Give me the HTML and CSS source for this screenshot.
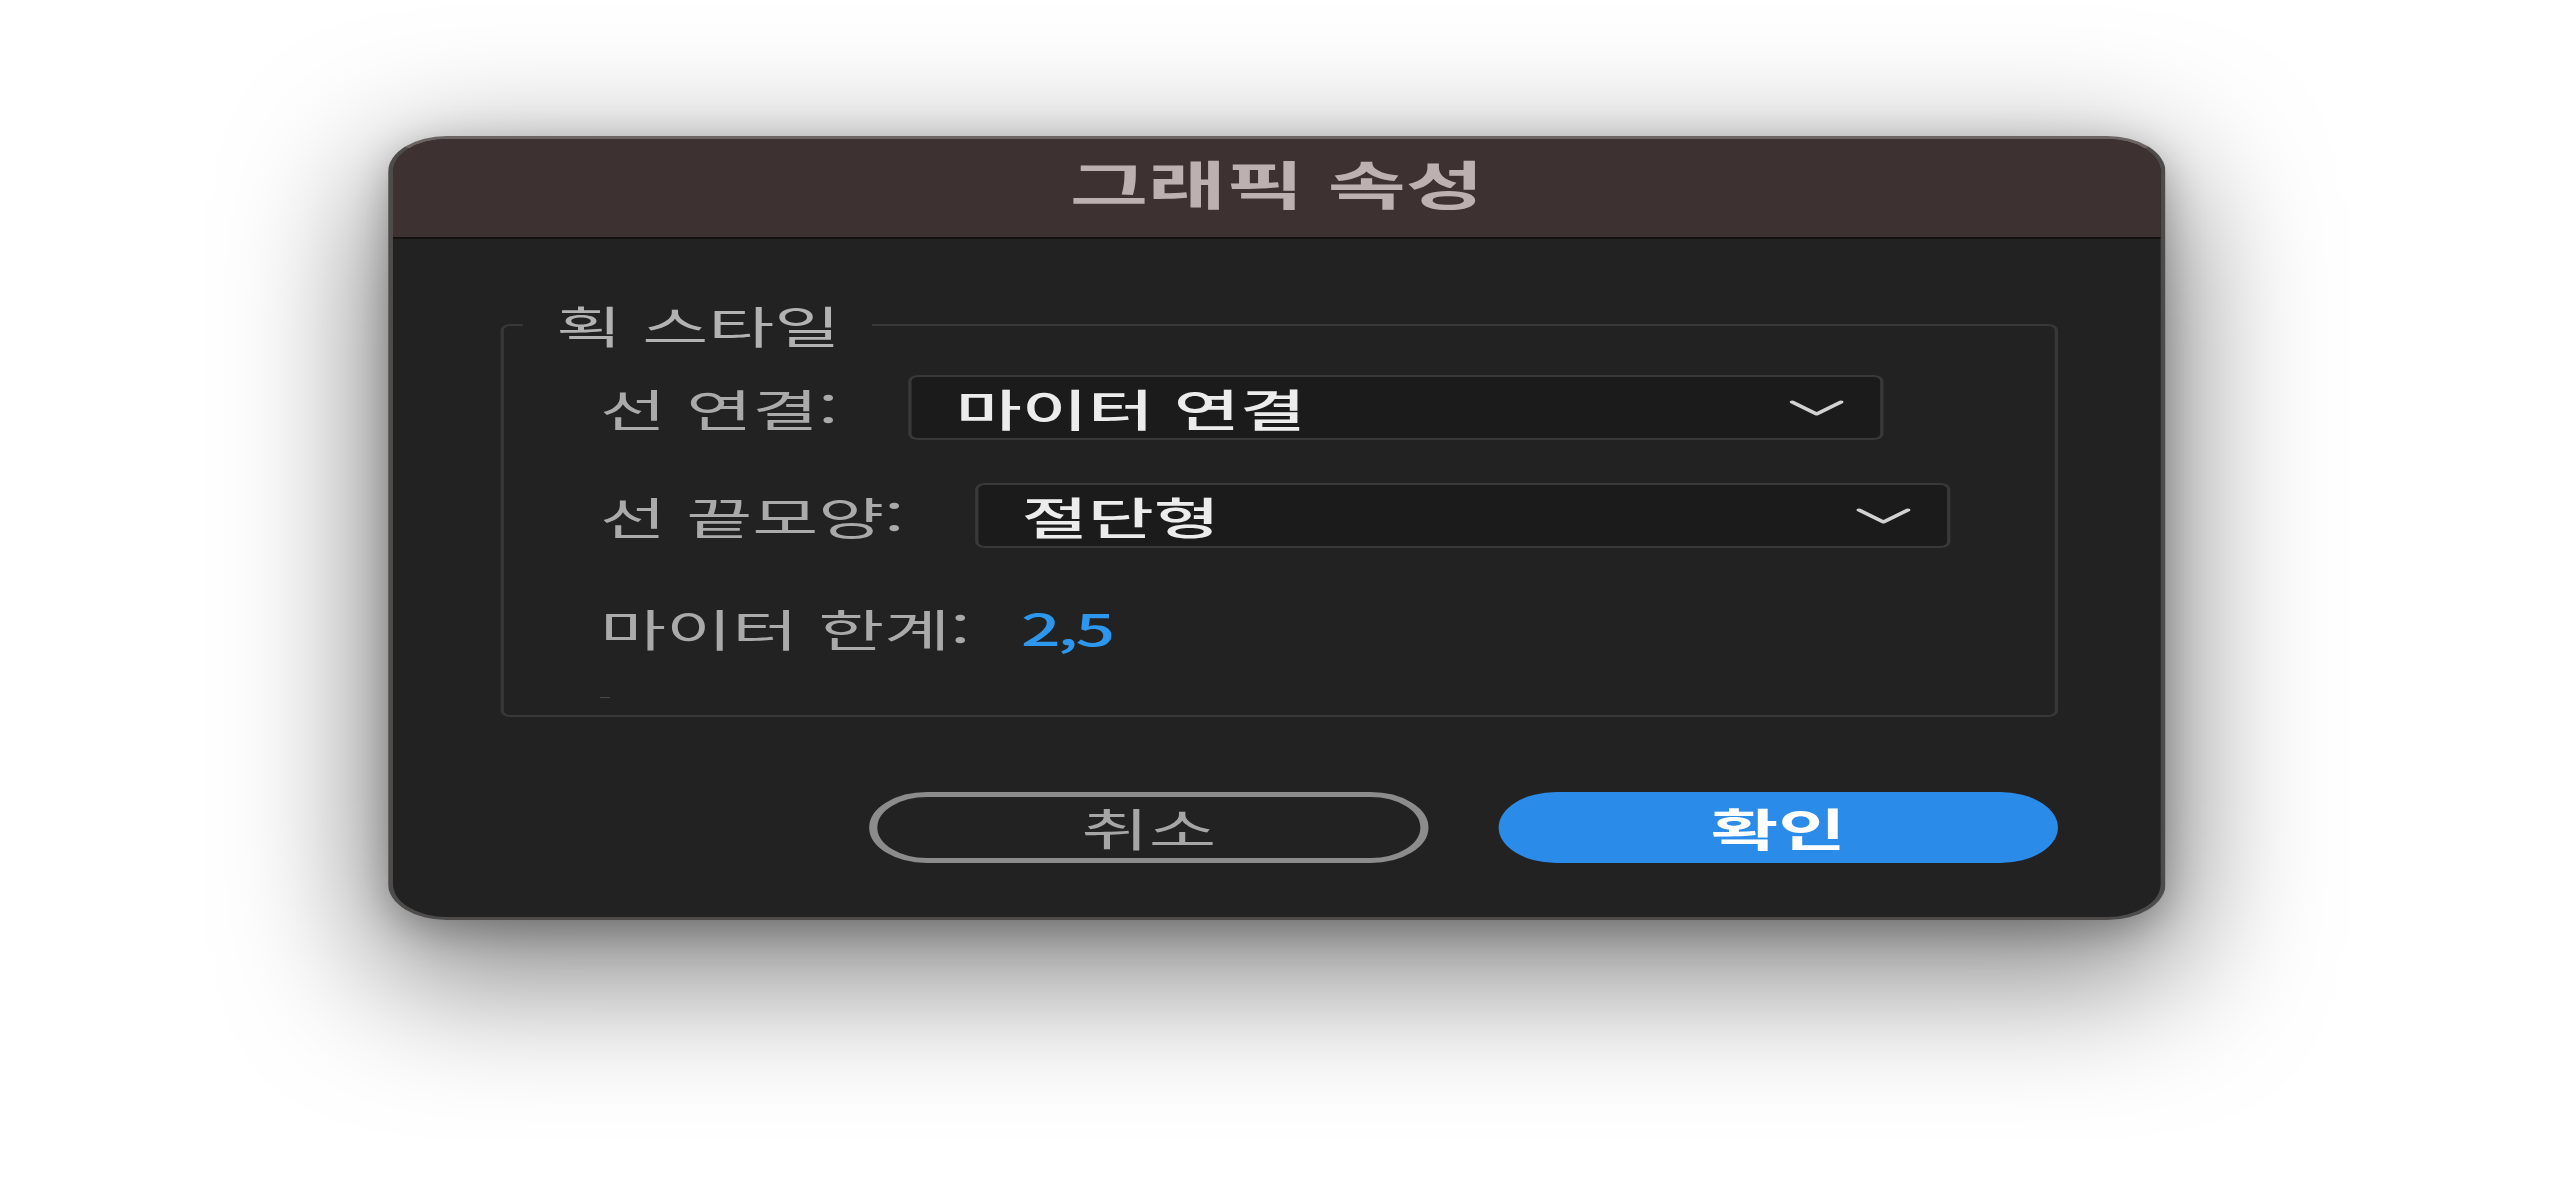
FILE: index.html
```html
<!DOCTYPE html>
<html lang="ko">
<head>
<meta charset="utf-8">
<title>그래픽 속성</title>
<link rel="stylesheet" href="styles.css">
</head>
<body>
<div class="stage">
  <div class="dialog">
    <header class="titlebar"><h1 class="title">그래픽 속성</h1></header>
    <div class="content">
      <fieldset class="group">
        <legend class="legend">획 스타일</legend>
        <div class="group-body">
          <div class="row row-join">
            <span class="label">선 연결:</span>
            <div class="select">
              <span class="value">마이터 연결</span>
              <svg class="chev" viewBox="0 0 34 18" width="34" height="18"><path d="M2 3 L17 15 L32 3" fill="none" stroke="#d2d2d2" stroke-width="3" stroke-linecap="round" stroke-linejoin="round"/></svg>
            </div>
          </div>
          <div class="row row-cap">
            <span class="label">선 끝모양:</span>
            <div class="select">
              <span class="value">절단형</span>
              <svg class="chev" viewBox="0 0 34 18" width="34" height="18"><path d="M2 3 L17 15 L32 3" fill="none" stroke="#d2d2d2" stroke-width="3" stroke-linecap="round" stroke-linejoin="round"/></svg>
            </div>
          </div>
          <div class="row row-limit">
            <span class="label">마이터 한계:</span>
            <span class="num">2,5</span>
          </div>
          <div class="dash"></div>
        </div>
      </fieldset>
      <div class="actions">
        <button class="btn btn-cancel" type="button">취소</button>
        <button class="btn btn-ok" type="button">확인</button>
      </div>
    </div>
  </div>
</div>
</body>
</html>
```
FILE: styles.css
```css
html, body {
  margin: 0;
  padding: 0;
  background: #ffffff;
}
body {
  width: 2557px;
  height: 1187px;
  overflow: hidden;
  font-family: "Noto Sans CJK KR", "Noto Sans", sans-serif;
}
.stage {
  width: 1568px;
  height: 1187px;
  box-sizing: border-box;
  padding: 136px 0 0 238px;
  transform: scaleX(1.6307);
  transform-origin: 0 0;
}
.dialog {
  width: 1090px;
  box-sizing: border-box;
  background: #222222;
  border: 3px solid #4e4b4b;
  border-top-color: #6c6363;
  border-radius: 36px;
  overflow: hidden;
  box-shadow: 0 45px 110px 10px rgba(0, 0, 0, 0.5), 0 10px 30px rgba(0, 0, 0, 0.25);
}
.titlebar {
  height: 98px;
  background: #3d3231;
  border-bottom: 2px solid #131111;
  display: flex;
  align-items: center;
  justify-content: center;
}
.title {
  margin: 0 0 10px 0;
  font-size: 52px;
  line-height: 1;
  font-weight: 700;
  color: #bcb0b0;
}
.content {
  padding: 61px 63px 54px 66px;
}
.group {
  margin: 0;
  padding: 25px 0 17px 0;
  border: 2px solid #383838;
  border-radius: 6px;
  min-width: 0;
}
.group-body {
  padding-left: 59px;
}
.legend {
  margin-left: 12px;
  padding: 0 20px;
  font-size: 44px;
  line-height: 50px;
  color: #b2b2b2;
}
.row {
  display: flex;
  align-items: center;
  height: 65px;
}
.row-cap {
  margin-top: 43px;
}
.row-limit {
  margin-top: 47px;
}
.label {
  font-size: 44px;
  line-height: 1;
  color: #aaaaaa;
}
.select {
  margin-left: 43px;
  width: 598px;
  height: 65px;
  box-sizing: border-box;
  background: #1b1b1b;
  border: 2px solid #393939;
  border-radius: 6px;
  display: flex;
  align-items: center;
  justify-content: space-between;
  padding: 0 22px 0 27px;
}
.value {
  font-size: 44px;
  line-height: 1;
  font-weight: 500;
  color: #ececec;
}
.chev {
  display: block;
}
.num {
  margin-left: 31px;
  font-size: 43px;
  line-height: 1;
  font-weight: 500;
  letter-spacing: -2px;
  color: #2d97ee;
}
.dash {
  margin-top: 37px;
  width: 6px;
  height: 1px;
  background: #4a4a4a;
}
.actions {
  margin-top: 75px;
  display: flex;
  justify-content: flex-end;
  gap: 43px;
}
.btn {
  width: 343px;
  height: 71px;
  box-sizing: border-box;
  border-radius: 36px;
  font-family: "Noto Sans CJK KR", "Noto Sans", sans-serif;
  font-size: 45px;
  line-height: 1;
  padding: 0;
  cursor: pointer;
}
.btn-cancel {
  background: transparent;
  border: 5px solid #8c8c8c;
  color: #a6a6a6;
}
.btn-ok {
  background: #2a8ce8;
  border: none;
  color: #ffffff;
  font-weight: 700;
}
```
